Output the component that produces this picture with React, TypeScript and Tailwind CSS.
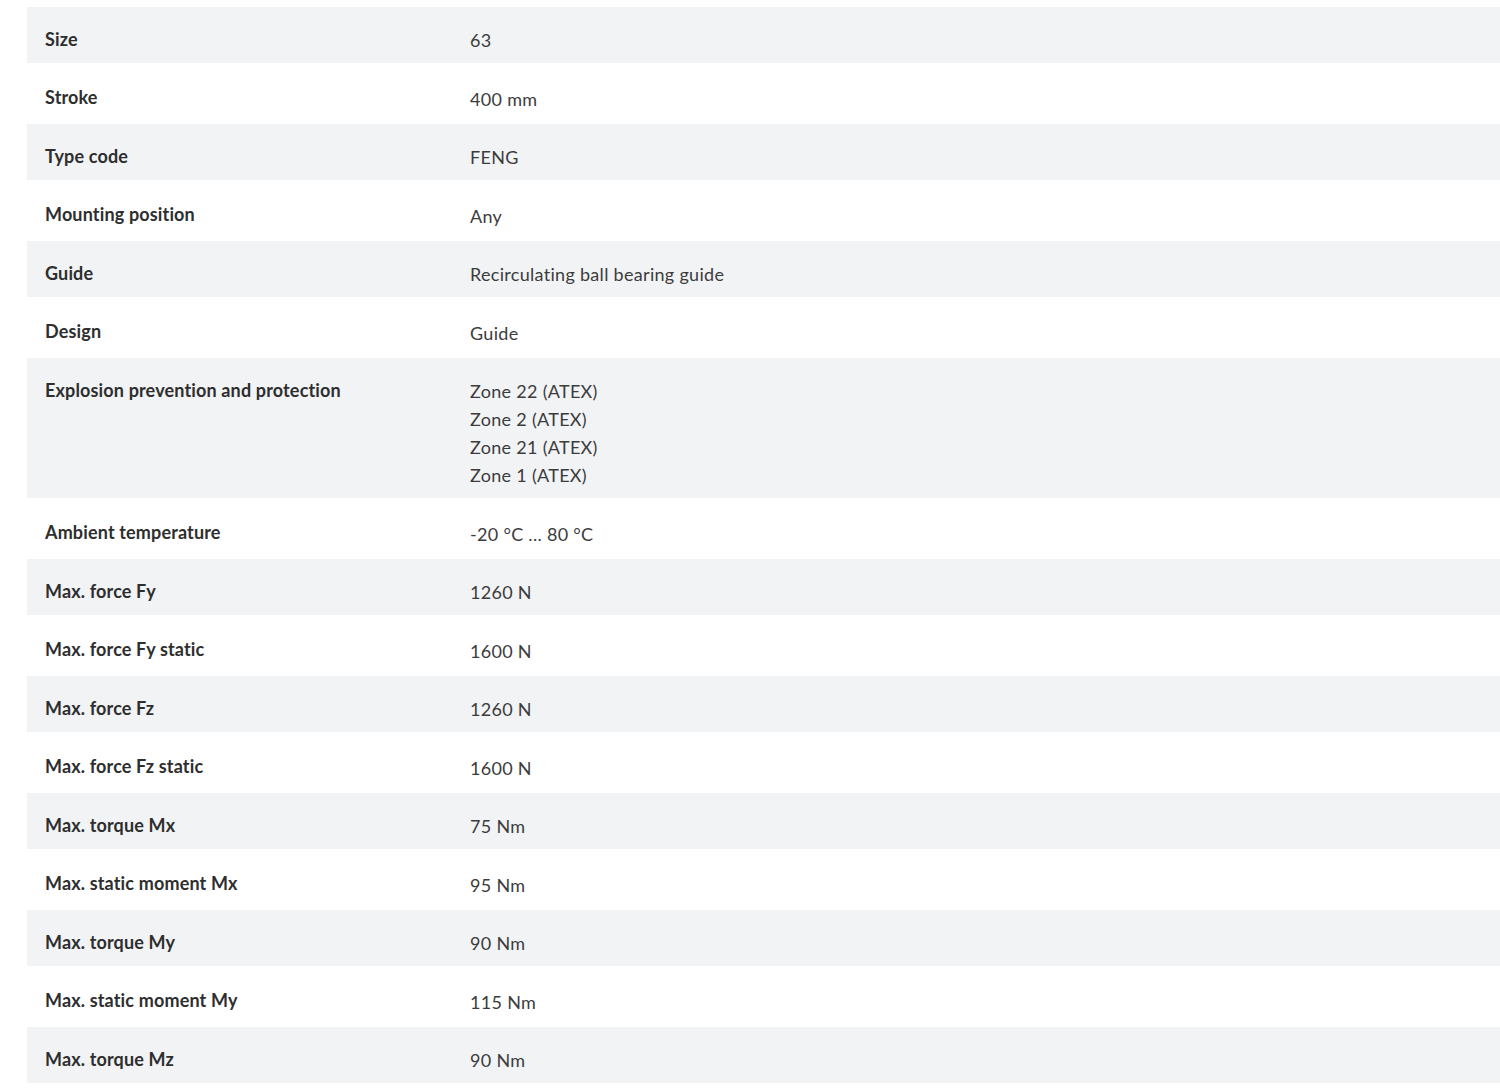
const rows: { label: string; value: string[] }[] = [
  { label: "Size", value: ["63"] },
  { label: "Stroke", value: ["400 mm"] },
  { label: "Type code", value: ["FENG"] },
  { label: "Mounting position", value: ["Any"] },
  { label: "Guide", value: ["Recirculating ball bearing guide"] },
  { label: "Design", value: ["Guide"] },
  {
    label: "Explosion prevention and protection",
    value: ["Zone 22 (ATEX)", "Zone 2 (ATEX)", "Zone 21 (ATEX)", "Zone 1 (ATEX)"],
  },
  { label: "Ambient temperature", value: ["-20 °C ... 80 °C"] },
  { label: "Max. force Fy", value: ["1260 N"] },
  { label: "Max. force Fy static", value: ["1600 N"] },
  { label: "Max. force Fz", value: ["1260 N"] },
  { label: "Max. force Fz static", value: ["1600 N"] },
  { label: "Max. torque Mx", value: ["75 Nm"] },
  { label: "Max. static moment Mx", value: ["95 Nm"] },
  { label: "Max. torque My", value: ["90 Nm"] },
  { label: "Max. static moment My", value: ["115 Nm"] },
  { label: "Max. torque Mz", value: ["90 Nm"] },
];

export default function App() {
  return (
    <div className="min-h-screen bg-white pt-[7px] pl-[27px] font-['Lato',sans-serif] text-[18px] leading-[28px]">
      <table className="w-full table-fixed border-collapse">
        <tbody>
          {rows.map((row, i) => (
            <tr
              key={row.label}
              className={i % 2 === 0 ? "bg-[#f2f3f5]" : "bg-white"}
            >
              <td
                className={`w-[443px] pl-[18px] align-top font-bold tracking-[0.15px] text-[#2e2e2e] ${
                  i % 2 === 0 ? "pt-[18px] pb-[10px]" : "pt-[20px] pb-[13px]"
                }`}
              >
                {row.label}
              </td>
              <td
                className={`align-top tracking-[0.3px] text-[#3c3c3c] ${
                  i % 2 === 0 ? "pt-[19px] pb-[9px]" : "pt-[22px] pb-[11px]"
                }`}
              >
                {row.value.map((v) => (
                  <div key={v}>{v}</div>
                ))}
              </td>
            </tr>
          ))}
        </tbody>
      </table>
    </div>
  );
}
